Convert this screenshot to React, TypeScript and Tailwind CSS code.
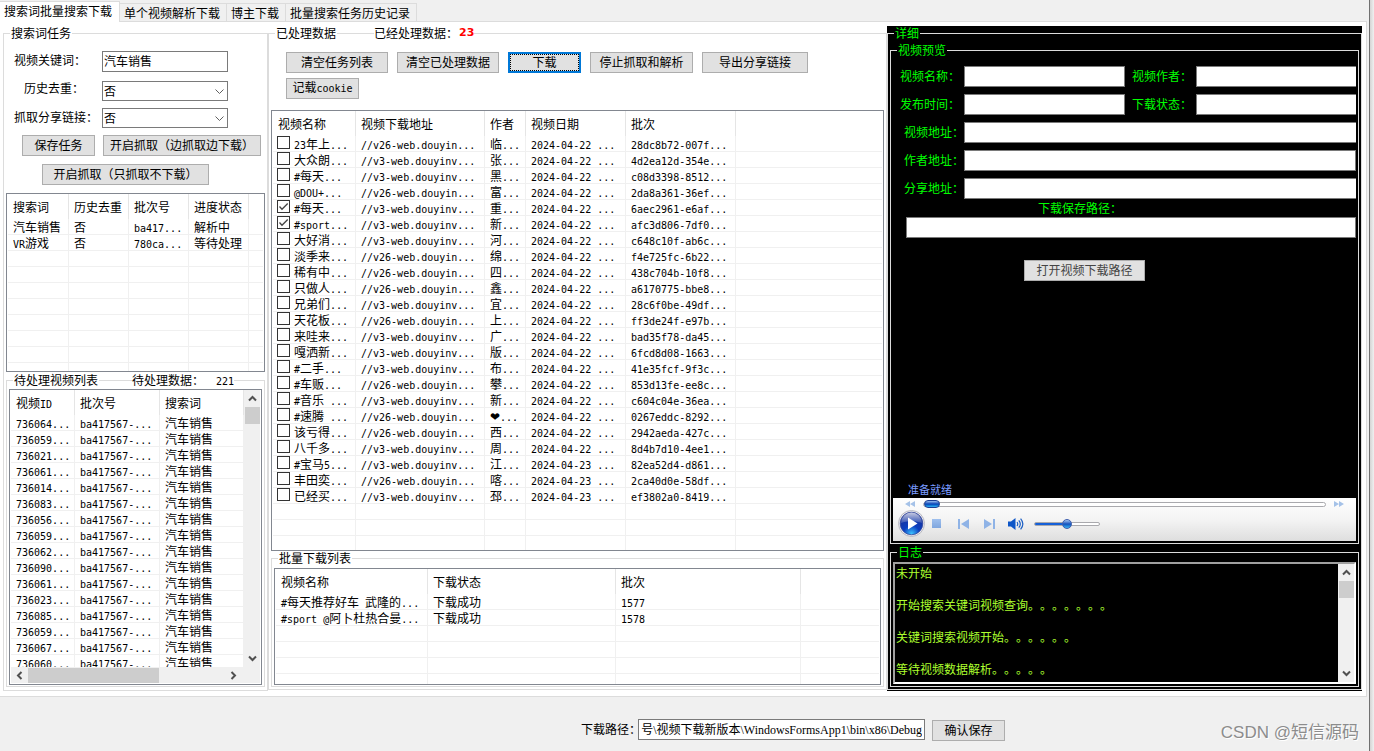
import { Fragment, useState, type ReactNode } from "react";

type Column = { label: string; width: string };
type Row = string[];

const TABS = ["搜索词批量搜索下载", "单个视频解析下载", "博主下载", "批量搜索任务历史记录"];

const TASK_COLUMNS: Column[] = [
  { label: "搜索词", width: "w-[61px]" },
  { label: "历史去重", width: "w-[60px]" },
  { label: "批次号", width: "w-[60px]" },
  { label: "进度状态", width: "w-[60px]" },
];

const TASKS: Row[] = [
  ["汽车销售", "否", "ba417...", "解析中"],
  ["VR游戏", "否", "780ca...", "等待处理"],
];

const PENDING_COLUMNS: Column[] = [
  { label: "视频ID", width: "w-[64px]" },
  { label: "批次号", width: "w-[85px]" },
  { label: "搜索词", width: "w-[84px]" },
];

const PENDING_IDS = [
  "736064", "736059", "736021", "736061", "736014", "736083", "736056", "736059",
  "736062", "736090", "736061", "736023", "736085", "736059", "736067", "736060",
];

const VIDEO_COLUMNS: Column[] = [
  { label: "视频名称", width: "w-[83px]" },
  { label: "视频下载地址", width: "w-[129px]" },
  { label: "作者", width: "w-[41px]" },
  { label: "视频日期", width: "w-[100px]" },
  { label: "批次", width: "w-[110px]" },
];

const V26 = "//v26-web.douyin...";
const V3 = "//v3-web.douyinv...";

const VIDEOS: Row[] = [
  ["23年上...", V26, "临...", "2024-04-22 ...", "28dc8b72-007f..."],
  ["大众朗...", V3, "张...", "2024-04-22 ...", "4d2ea12d-354e..."],
  ["#每天...", V3, "黑...", "2024-04-22 ...", "c08d3398-8512..."],
  ["@DOU+...", V26, "富...", "2024-04-22 ...", "2da8a361-36ef..."],
  ["#每天...", V3, "重...", "2024-04-22 ...", "6aec2961-e6af..."],
  ["#sport...", V3, "新...", "2024-04-22 ...", "afc3d806-7df0..."],
  ["大好消...", V3, "河...", "2024-04-22 ...", "c648c10f-ab6c..."],
  ["淡季来...", V26, "绵...", "2024-04-22 ...", "f4e725fc-6b22..."],
  ["稀有中...", V26, "四...", "2024-04-22 ...", "438c704b-10f8..."],
  ["只做人...", V26, "鑫...", "2024-04-22 ...", "a6170775-bbe8..."],
  ["兄弟们...", V3, "宜...", "2024-04-22 ...", "28c6f0be-49df..."],
  ["天花板...", V26, "上...", "2024-04-22 ...", "ff3de24f-e97b..."],
  ["来哇来...", V3, "广...", "2024-04-22 ...", "bad35f78-da45..."],
  ["嘎洒新...", V3, "版...", "2024-04-22 ...", "6fcd8d08-1663..."],
  ["#二手...", V3, "布...", "2024-04-22 ...", "41e35fcf-9f3c..."],
  ["#车贩...", V26, "攀...", "2024-04-22 ...", "853d13fe-ee8c..."],
  ["#音乐 ...", V3, "新...", "2024-04-22 ...", "c604c04e-36ea..."],
  ["#速腾 ...", V26, "❤...", "2024-04-22 ...", "0267eddc-8292..."],
  ["该亏得...", V26, "西...", "2024-04-22 ...", "2942aeda-427c..."],
  ["八千多...", V3, "周...", "2024-04-22 ...", "8d4b7d10-4ee1..."],
  ["#宝马5...", V3, "江...", "2024-04-23 ...", "82ea52d4-d861..."],
  ["丰田奕...", V26, "喀...", "2024-04-23 ...", "2ca40d0e-58df..."],
  ["已经买...", V3, "邳...", "2024-04-23 ...", "ef3802a0-8419..."],
];

const DOWNLOAD_COLUMNS: Column[] = [
  { label: "视频名称", width: "w-[152px]" },
  { label: "下载状态", width: "w-[188px]" },
  { label: "批次", width: "w-[185px]" },
];

const DOWNLOADS: Row[] = [
  ["#每天推荐好车 武隆的...", "下载成功", "1577"],
  ["#sport @阿卜杜热合曼...", "下载成功", "1578"],
];

const LOG = [
  "未开始",
  "开始搜索关键词视频查询。。。。。。。",
  "关键词搜索视频开始。。。。。。",
  "等待视频数据解析。。。。。",
].join("\n\n");

// latin runs are set half as wide as the chinese glyphs around them
function Text({ children }: { children: string }) {
  return (
    <>
      {children.split(/([\x20-\x7e]+)/).map((part, i) =>
        i % 2 ? (
          <span key={i} className="font-['DejaVu_Sans_Mono','Liberation_Mono',monospace] text-[10px] whitespace-pre">{part}</span>
        ) : (
          <Fragment key={i}>{part}</Fragment>
        )
      )}
    </>
  );
}

function Group({ title, className = "", children }: { title: string; className?: string; children: ReactNode }) {
  return (
    <fieldset className={`min-w-0 border border-[#dcdcdc] ${className}`}>
      <legend className="ml-1 px-px leading-[14px]">{title}</legend>
      {children}
    </fieldset>
  );
}

function Button({ className = "", children }: { className?: string; children: string }) {
  return (
    <button className={`flex h-[21px] items-center justify-center border border-[#adadad] bg-[#e1e1e1] whitespace-nowrap hover:border-[#0078d7] ${className}`}>
      <span className="pb-px"><Text>{children}</Text></span>
    </button>
  );
}

function SelectBox({ id }: { id: string }) {
  return (
    <div className="relative w-[126px]">
      <select id={id} defaultValue="否" className="block h-5 w-full appearance-none border border-[#7a7a7a] bg-white px-px leading-[18px] outline-none">
        <option>否</option>
        <option>是</option>
      </select>
      <svg className="pointer-events-none absolute top-2 right-1 h-[5px] w-[9px]" viewBox="0 0 9 5" fill="none" stroke="#606060">
        <path d="M0.5 0.5 4.5 4.5 8.5 0.5" />
      </svg>
    </div>
  );
}

function CheckBox({ checked, onChange }: { checked: boolean; onChange: () => void }) {
  return (
    <span className="relative block size-[13px] shrink-0">
      <input type="checkbox" checked={checked} onChange={onChange} className="block size-[13px] appearance-none border border-[#333] bg-white" />
      {checked && (
        <svg className="pointer-events-none absolute inset-0 size-[13px]" viewBox="0 0 13 13" fill="none" stroke="#444" strokeWidth="1.3">
          <path d="M2.5 6.5 5 9.2 10.7 3.5" />
        </svg>
      )}
    </span>
  );
}

function ListView({ label, columns, rows, lines, checked, onCheck }: {
  label: string;
  columns: Column[];
  rows: Row[];
  lines: number;
  checked?: number[];
  onCheck?: (i: number) => void;
}) {
  const blank: Row[] = Array.from({ length: lines - rows.length }, () => columns.map(() => ""));
  return (
    <table aria-label={label} className="w-full table-fixed border-separate border-spacing-0">
      <thead>
        <tr className="h-[25px]">
          {columns.map((c) => (
            <th key={c.label} className={`${c.width} border-r border-[#e5e5e5] p-0 pl-[5px] text-left font-normal whitespace-nowrap`}>
              <div className="h-[14px]"><Text>{c.label}</Text></div>
            </th>
          ))}
          <th className="p-0" />
        </tr>
      </thead>
      <tbody>
        {[...rows, ...blank].map((row, i) => (
          <tr key={i}>
            {row.map((cell, j) => (
              <td key={j} className="border-r border-b border-[#f0f0f0] p-0 pl-[5px] leading-[15px] whitespace-nowrap">
                {checked && j === 0 && cell ? (
                  <label className="-ml-px flex h-[15px] gap-1">
                    <CheckBox checked={checked.includes(i)} onChange={() => onCheck?.(i)} />
                    <span><Text>{cell}</Text></span>
                  </label>
                ) : (
                  <div className="h-[15px]"><Text>{cell}</Text></div>
                )}
              </td>
            ))}
            <td className="border-b border-[#f0f0f0] p-0" />
          </tr>
        ))}
      </tbody>
    </table>
  );
}

function Arrow({ dir }: { dir: "up" | "down" | "left" | "right" }) {
  const turn = { up: "", down: "rotate-180", left: "-rotate-90", right: "rotate-90" }[dir];
  return (
    <svg className={`size-[9px] ${turn}`} viewBox="0 0 9 9" fill="none" stroke="#505050" strokeWidth="2">
      <path d="M1 6.5 4.5 3 8 6.5" />
    </svg>
  );
}

function VerticalScroll() {
  return (
    <div className="flex w-4 shrink-0 flex-col items-center justify-between bg-[#f0f0f0] pb-1">
      <div className="flex w-full flex-col items-center">
        <div className="flex h-[17px] items-center"><Arrow dir="up" /></div>
        <div className="h-[17px] w-[15px] bg-[#cdcdcd]" />
      </div>
      <Arrow dir="down" />
    </div>
  );
}

function TextField({ id, label, labelClass = "", className = "" }: { id: string; label: string; labelClass?: string; className?: string }) {
  return (
    <>
      <label htmlFor={id} className={`leading-5 whitespace-nowrap ${labelClass}`}>{label}</label>
      <input id={id} className={`h-[21px] min-w-0 border border-[#7a7a7a] bg-white px-0.5 text-black outline-none ${className}`} />
    </>
  );
}

function TaskPanel() {
  return (
    <Group title="搜索词任务" className="px-[2px] pb-[2px]">
      <div className="grid grid-cols-[96px_126px] items-start pt-[11px]">
        <label htmlFor="keyword" className="pl-2 leading-[18px]">视频关键词：</label>
        <input id="keyword" defaultValue="汽车销售" className="h-[21px] border border-[#7a7a7a] bg-white px-px pb-0.5 outline-none" />
        <label htmlFor="dedupe" className="mt-[7px] pl-[18px] leading-[18px]">历史去重：</label>
        <div className="mt-[9px]"><SelectBox id="dedupe" /></div>
        <label htmlFor="share" className="mt-[7px] pl-2 leading-[18px] whitespace-nowrap">抓取分享链接：</label>
        <div className="mt-[7px]"><SelectBox id="share" /></div>
      </div>
      <div className="mt-[7px] flex gap-2 pl-4">
        <Button className="w-[73px]">保存任务</Button>
        <Button className="w-[158px]">开启抓取（边抓取边下载）</Button>
      </div>
      <div className="mt-2 flex pl-9">
        <Button className="w-[167px]">开启抓取（只抓取不下载）</Button>
      </div>
      <div className="mt-2 h-[179px] overflow-hidden border border-[#828790] p-px pt-0">
        <ListView label="搜索词任务" columns={TASK_COLUMNS} rows={TASKS} lines={10} />
      </div>

      <div className="relative mt-px">
        <Group title="待处理视频列表" className="px-[2px] pt-0 pb-px">
          <div className="mt-[2px] flex h-[296px] flex-col border border-[#828790] p-px pt-0">
            <div className="flex min-h-0 flex-1">
              <div className="min-w-0 flex-1 overflow-hidden">
                <ListView
                  label="待处理视频列表"
                  columns={PENDING_COLUMNS}
                  rows={PENDING_IDS.map((id) => [`${id}...`, "ba417567-...", "汽车销售"])}
                  lines={16}
                />
              </div>
              <VerticalScroll />
            </div>
            <div className="flex h-4 items-center justify-between bg-[#f0f0f0] pr-[22px]">
              <div className="flex items-center">
                <div className="flex w-[17px] justify-center"><Arrow dir="left" /></div>
                <div className="h-[15px] w-[131px] bg-[#cdcdcd]" />
              </div>
              <Arrow dir="right" />
            </div>
          </div>
        </Group>
        <div className="absolute top-0 left-[126px] flex h-[14px] bg-white">
          <span className="w-[84px]">待处理数据：</span>
          <span><Text>221</Text></span>
        </div>
      </div>
    </Group>
  );
}

function ProcessedPanel() {
  const [checked, setChecked] = useState([4, 5]);
  const toggle = (i: number) => setChecked(checked.includes(i) ? checked.filter((c) => c !== i) : [...checked, i]);

  return (
    <div className="relative min-w-0">
      <Group title="已处理数据" className="px-[2px] pb-[2px]">
        <div className="flex gap-[9px] pt-3 pl-[15px]">
          <Button className="w-[102px]">清空任务列表</Button>
          <Button className="w-[102px]">清空已处理数据</Button>
          <button className="h-[21px] w-[73px] border-2 border-[#0078d7] bg-[#e1e1e1]">
            <span className="flex h-full items-center justify-center border border-dotted border-black pb-px">下载</span>
          </button>
          <Button className="w-[103px]">停止抓取和解析</Button>
          <Button className="w-[106px]">导出分享链接</Button>
        </div>
        <div className="mt-[5px] pl-[15px]">
          <Button className="w-[73px]">记载cookie</Button>
        </div>
        <div className="mt-[11px] h-[441px] overflow-hidden border border-[#828790] p-px pt-0">
          <ListView label="已处理数据" columns={VIDEO_COLUMNS} rows={VIDEOS} lines={26} checked={checked} onCheck={toggle} />
        </div>
        <Group title="批量下载列表" className="px-[2px] pb-px">
          <div className="mt-[3px] h-[117px] overflow-hidden border border-[#828790] p-px pt-0">
            <ListView label="批量下载列表" columns={DOWNLOAD_COLUMNS} rows={DOWNLOADS} lines={6} />
          </div>
        </Group>
      </Group>
      <div className="absolute top-0 left-[106px] flex bg-white leading-[14px]">
        <span className="w-[85px]">已经处理数据：</span>
        <span className="font-['DejaVu_Sans',sans-serif] text-[11px] font-bold text-[#f00]">23</span>
      </div>
    </div>
  );
}

function Player() {
  return (
    <div className="h-[43px] bg-gradient-to-b from-white via-[#f4f4f4] to-[#dedede]">
      <div className="flex h-3 items-center gap-2 pr-3 pl-3">
        <svg className="h-[6px] w-[10px] shrink-0" viewBox="0 0 10 6" fill="#a5c2e8">
          <path d="M5 0v6L0 3zM10 0v6L5 3z" />
        </svg>
        <input
          type="range"
          aria-label="进度"
          defaultValue={0}
          className="h-[5px] min-w-0 flex-1 appearance-none rounded-full border border-[#a9a9ad] bg-white [&::-webkit-slider-thumb]:h-2 [&::-webkit-slider-thumb]:w-4 [&::-webkit-slider-thumb]:appearance-none [&::-webkit-slider-thumb]:rounded-full [&::-webkit-slider-thumb]:border [&::-webkit-slider-thumb]:border-[#1c3f94] [&::-webkit-slider-thumb]:bg-linear-to-b [&::-webkit-slider-thumb]:from-[#9cc0f0] [&::-webkit-slider-thumb]:via-[#0a3fb4] [&::-webkit-slider-thumb]:to-[#35b4f5]"
        />
        <svg className="h-[6px] w-[10px] shrink-0" viewBox="0 0 10 6" fill="#a5c2e8">
          <path d="M0 0v6l5-3zM5 0v6l5-3z" />
        </svg>
      </div>
      <div className="flex h-[27px] items-center pl-[5px]">
        <button aria-label="播放" className="w-[27px]">
          <svg className="size-[27px]" viewBox="0 0 27 27">
            <defs>
              <radialGradient id="ball" cx="50%" cy="95%" r="90%">
                <stop offset="0" stopColor="#3cc4ff" />
                <stop offset="0.4" stopColor="#0b3fc0" />
                <stop offset="1" stopColor="#1b2f92" />
              </radialGradient>
              <linearGradient id="shine" x1="0" y1="0" x2="0" y2="1">
                <stop offset="0" stopColor="#fff" stopOpacity="0.75" />
                <stop offset="1" stopColor="#fff" stopOpacity="0.15" />
              </linearGradient>
            </defs>
            <circle cx="13.5" cy="13.5" r="13" fill="#e9e9ee" stroke="#b9b9c2" />
            <circle cx="13.5" cy="13.5" r="11.3" fill="url(#ball)" stroke="#33479c" strokeWidth="0.8" />
            <path d="M3 13a10.5 10.5 0 0 1 21 0c-6-2.500-15-2.500-21 0z" fill="url(#shine)" />
            <path d="M10 7.500v12l9.500-6z" fill="#fff" />
          </svg>
        </button>
        <button aria-label="停止" className="ml-[7px] size-[9px] bg-gradient-to-b from-[#9fc0ee] to-[#7fa6de]" />
        <button aria-label="上一个" className="ml-[17px]">
          <svg className="h-[10px] w-[11px]" viewBox="0 0 11 10" fill="#8fb3e6">
            <path d="M0 0h2v10H0zM11 0v10L3 5z" />
          </svg>
        </button>
        <button aria-label="下一个" className="ml-[15px]">
          <svg className="h-[10px] w-[11px]" viewBox="0 0 11 10" fill="#8fb3e6">
            <path d="M9 0h2v10H9zM0 0v10l8-5z" />
          </svg>
        </button>
        <button aria-label="静音" className="ml-[13px]">
          <svg className="h-3 w-4" viewBox="0 0 16 12" fill="none" stroke="#1c5fc4" strokeWidth="1.2">
            <path d="M0 3.500h3L7.500 0v12L3 8.500H0z" fill="#0d56c8" stroke="none" />
            <path d="M9 4q1.500 2 0 4M10.800 2.300q3 3.700 0 7.400M12.600 0.700q4.500 5.300 0 10.600" />
          </svg>
        </button>
        <input
          type="range"
          aria-label="音量"
          defaultValue={50}
          className="ml-[10px] h-1 w-[66px] appearance-none rounded-full border border-[#a9a9ad] bg-linear-to-r from-[#1560d8] from-50% to-white to-50% [&::-webkit-slider-thumb]:size-[10px] [&::-webkit-slider-thumb]:appearance-none [&::-webkit-slider-thumb]:rounded-full [&::-webkit-slider-thumb]:border [&::-webkit-slider-thumb]:border-[#3f5fae] [&::-webkit-slider-thumb]:bg-linear-to-b [&::-webkit-slider-thumb]:from-[#a9c8f2] [&::-webkit-slider-thumb]:via-[#1450bc] [&::-webkit-slider-thumb]:to-[#3db4f2]"
        />
      </div>
    </div>
  );
}

function DetailPanel() {
  return (
    <div className="bg-black pb-px text-[#0f0]">
      <Group title="详细" className="px-[2px] pb-[2px]">
        <Group title="视频预览" className="mt-[3px] px-[2px] pb-[2px]">
          <div className="grid grid-cols-[71px_161px_71px_1fr] gap-y-[7px] pt-[9px]">
            <TextField id="name" label="视频名称：" labelClass="pl-[7px]" />
            <TextField id="author" label="视频作者：" labelClass="pl-[7px]" className="border-r-0" />
            <TextField id="time" label="发布时间：" labelClass="pl-[7px]" />
            <TextField id="state" label="下载状态：" labelClass="pl-[7px]" className="border-r-0" />
            <TextField id="video-url" label="视频地址：" labelClass="pl-[11px]" className="col-span-3 border-r-0" />
            <TextField id="author-url" label="作者地址：" labelClass="pl-[11px]" className="col-span-3" />
            <TextField id="share-url" label="分享地址：" labelClass="pl-[11px]" className="col-span-3 border-r-0" />
          </div>
          <label htmlFor="save-path" className="block pl-[145px] leading-[18px]">下载保存路径：</label>
          <div className="flex pl-[13px]">
            <input id="save-path" className="h-[21px] min-w-0 flex-1 border border-[#7a7a7a] bg-white px-0.5 text-black outline-none" />
          </div>
          <Button className="mt-[22px] ml-[131px] w-[121px] text-[#444]">打开视频下载路径</Button>
          <div className="flex h-[217px] items-end pl-[15px] text-[11px] leading-[18px] text-[#7b9cff]">准备就绪</div>
          <Player />
        </Group>
        <Group title="日志" className="mt-px px-[2px] pb-[2px]">
          <div className="mt-[3px] flex h-[122px] border-2 border-t-[#a0a0a0] border-r-white border-b-white border-l-[#a0a0a0]">
            <textarea
              readOnly
              aria-label="日志"
              value={LOG}
              className="min-w-0 flex-1 resize-none overflow-hidden bg-black px-px pt-px leading-4 text-[#adff2f] outline-none [text-spacing-trim:space-all]"
            />
            <VerticalScroll />
          </div>
        </Group>
      </Group>
    </div>
  );
}

export default function App() {
  const [tab, setTab] = useState(0);

  return (
    <div className="flex min-h-screen bg-[#f0f0f0] font-['Noto_Sans_CJK_SC',sans-serif] text-[12px] leading-[14px] text-black">
      <div className="relative flex min-w-0 flex-1 flex-col">
        <div role="tablist" className="flex h-[21px] items-end">
          {TABS.map((t, i) => (
            <button
              key={t}
              role="tab"
              aria-selected={tab === i}
              onClick={() => setTab(i)}
              className={
                tab === i
                  ? "relative z-10 -mb-px h-[21px] border-t border-r border-[#dcdcdc] bg-white px-1 pr-[7px] pb-[3px] whitespace-nowrap"
                  : "h-[18px] border-t border-r border-[#dcdcdc] pr-[6px] pl-1 whitespace-nowrap"
              }
            >
              {t}
            </button>
          ))}
        </div>
        <main className="mr-[2px] grid grid-cols-[265px_1fr_475px] border border-l-0 border-[#dcdcdc] bg-white pt-1 pr-1 pb-[5px] pl-[3px]">
          <TaskPanel />
          <ProcessedPanel />
          <DetailPanel />
        </main>
        <footer className="flex items-start pt-[22px] pl-[581px]">
          <label htmlFor="download-path" className="w-[57px] leading-5 whitespace-nowrap">下载路径：</label>
          <input
            id="download-path"
            defaultValue="号\视频下载新版本\WindowsFormsApp1\bin\x86\Debug"
            className="h-[21px] w-[287px] border border-[#7a7a7a] bg-white px-0.5 pb-0.5 text-right font-['Liberation_Serif','Noto_Sans_CJK_SC',serif] outline-none"
          />
          <Button className="mt-px ml-[7px] w-[73px]">确认保存</Button>
        </footer>
        <div className="absolute right-[10px] bottom-[6px] font-['Liberation_Sans','Noto_Sans_CJK_SC',sans-serif] text-[17px] leading-6 text-[#8c8c8c] [text-shadow:1px_1px_0_#fff]">CSDN @短信源码</div>
      </div>
      <div className="w-[5px] border-l border-[#707070] bg-gradient-to-r from-[#d4d4d4] to-[#f0f0f0]" />
    </div>
  );
}
